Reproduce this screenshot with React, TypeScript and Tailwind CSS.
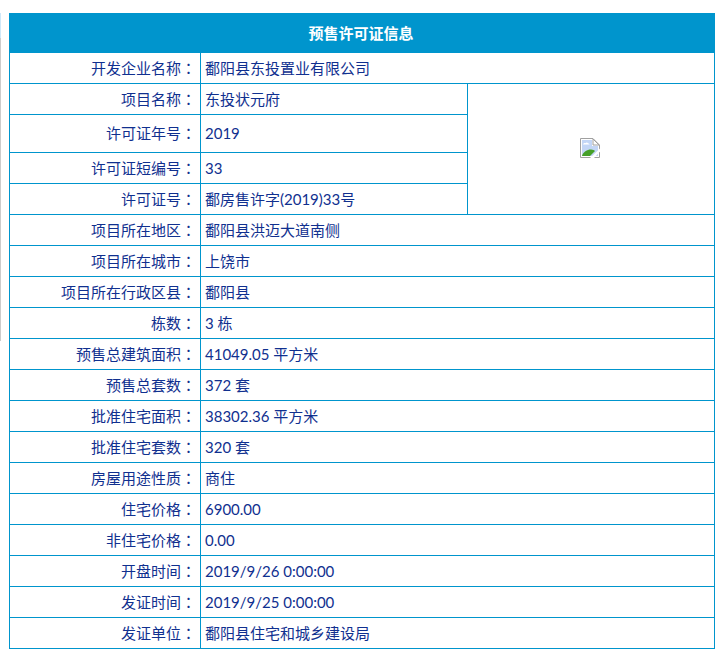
const ROWS_A: [string, string, string][] = [
  ["项目名称", "东投状元府", "h-[31px]"],
  ["许可证年号", "2019", "h-[38px]"],
  ["许可证短编号", "33", "h-[31px]"],
  ["许可证号", "鄱房售许字(2019)33号", "h-[31px]"],
];
const ROWS_B: [string, string][] = [
  ["项目所在地区", "鄱阳县洪迈大道南侧"],
  ["项目所在城市", "上饶市"],
  ["项目所在行政区县", "鄱阳县"],
  ["栋数", "3 栋"],
  ["预售总建筑面积", "41049.05 平方米"],
  ["预售总套数", "372 套"],
  ["批准住宅面积", "38302.36 平方米"],
  ["批准住宅套数", "320 套"],
  ["房屋用途性质", "商住"],
  ["住宅价格", "6900.00"],
  ["非住宅价格", "0.00"],
  ["开盘时间", "2019/9/26 0:00:00"],
  ["发证时间", "2019/9/25 0:00:00"],
  ["发证单位", "鄱阳县住宅和城乡建设局"],
];
const label = "border border-[#0095cd] text-right pr-[4px] pl-0 font-normal";
const value = "border border-[#0095cd] text-left pl-[4px] font-normal";

function Label({ text }: { text: string }) {
  return (
    <td className={label}>
      {text}
      <span className="font-['Noto_Sans_CJK_TC',sans-serif]">：</span>
    </td>
  );
}

function BrokenImage() {
  return (
    <svg width="20" height="20" viewBox="0 0 20 20" className="block mx-auto -translate-x-px">
      <path d="M0.5 0.5H13L19.5 7V19.5H0.5Z" fill="#fff" stroke="#a0a0a0" />
      <path d="M2 2H12V8H18V18H2Z" fill="#c3d6f6" />
      <path d="M13 1L19 7H13Z" fill="#fff" stroke="#a0a0a0" />
      <path d="M3 6.5C3.5 5 5 5 5.5 5.2C6 4.2 7.5 4.2 8 5.2C9 5.2 9.5 6 9.5 6.5Z" fill="#fff" />
      <path d="M2 18C3 14 7 11.5 11 11.5C13 11.5 14.5 12.5 15 13L10 18Z" fill="#45a028" />
      <path d="M10 20L20 10.5V13.5L14 20Z" fill="#fff" />
    </svg>
  );
}

export default function App() {
  return (
    <div className="relative w-[728px] h-[662px] bg-white pt-[13px] pl-[9px] text-[15px] text-[#10308f] font-['Lato','Noto_Sans_CJK_SC',sans-serif]">
      <div className="absolute left-0 top-[13px] w-[1px] h-[25px] bg-[#cfe8f8]" />
      <div className="absolute left-0 top-[38px] w-[1px] h-[303px] bg-[#cccccc]" />
      <table className="w-[705px] border-collapse table-fixed">
        <colgroup>
          <col className="w-[191px]" />
          <col className="w-[267px]" />
          <col className="w-[247px]" />
        </colgroup>
        <tbody>
          <tr className="h-[39px] bg-[#0095cd]">
            <th colSpan={3} className="border border-[#0095cd] text-center text-white font-bold text-[15px] pr-[2px]">
              预售许可证信息
            </th>
          </tr>
          <tr className="h-[31px]">
            <Label text="开发企业名称" />
            <td colSpan={2} className={value}>鄱阳县东投置业有限公司</td>
          </tr>
          {ROWS_A.map(([k, v, h], i) => (
            <tr key={k} className={h}>
              <Label text={k} />
              <td className={value}>{v}</td>
              {i === 0 && (
                <td rowSpan={4} className="border border-[#0095cd] pb-[2px]">
                  <BrokenImage />
                </td>
              )}
            </tr>
          ))}
          {ROWS_B.map(([k, v]) => (
            <tr key={k} className="h-[31px]">
              <Label text={k} />
              <td colSpan={2} className={value}>{v}</td>
            </tr>
          ))}
        </tbody>
      </table>
    </div>
  );
}
